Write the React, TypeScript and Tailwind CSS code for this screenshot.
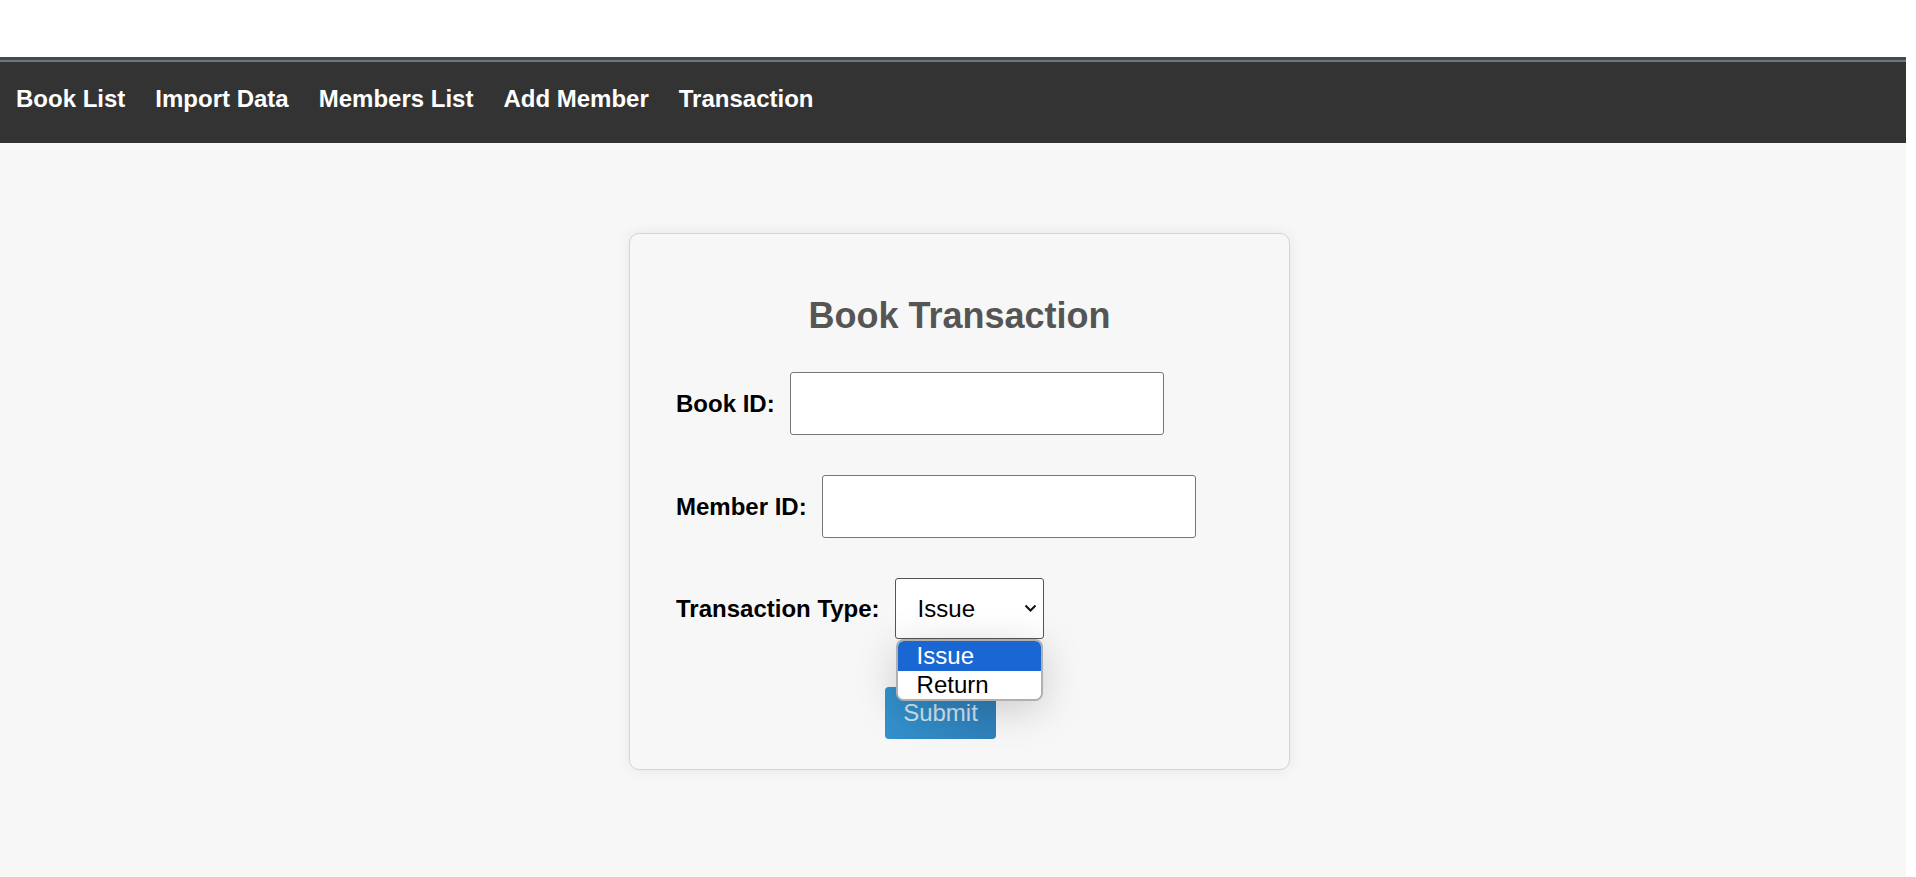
import { useState } from "react";

const navLinks = ["Book List", "Import Data", "Members List", "Add Member", "Transaction"];

function Field({ label, children }: { label: string; children: React.ReactNode }) {
  return (
    <div className="flex items-center gap-[15px]">
      <label className="text-[24px] font-bold text-black leading-[28px]">{label}</label>
      {children}
    </div>
  );
}

export default function App() {
  const [type, setType] = useState("Issue");

  return (
    <div className="min-h-screen w-full bg-white font-['Liberation_Sans',Arial,sans-serif]">
      <div className="w-[1906px] min-h-[877px] flex flex-col">
        {/* blank strip above the nav */}
        <div className="h-[57px] bg-white" />

        {/* Nav bar */}
        <nav className="border-t-[3px] border-[#3f4a52]">
          <div className="border-t-2 border-[#6b7882] h-[83px] bg-[#333333] flex items-center pb-[8px] pl-[16px] gap-[30px]">
            {navLinks.map((link) => (
              <a key={link} href="#" className="text-white text-[24px] font-bold leading-[28px]">
                {link}
              </a>
            ))}
          </div>
        </nav>

        {/* Page */}
        <main className="flex-1 bg-[#f7f7f7] pt-[90px] pl-[629px]">
          <div className="w-[661px] bg-[#f7f7f7] border border-[#d4d4d4] rounded-[10px] shadow-[0_0_14px_rgba(0,0,0,0.07)] pt-[62px] pb-[30px] px-[46px]">
            <h2 className="text-center text-[36px] leading-[40px] font-bold text-[#555555]">Book Transaction</h2>

            <form className="flex flex-col" onSubmit={(e) => e.preventDefault()}>
              <div className="mt-[36px]">
                <Field label="Book ID:">
                  <input className="w-[374px] h-[63px] bg-white border border-[#767676] rounded-[3px] px-2 text-[24px] outline-none" />
                </Field>
              </div>

              <div className="mt-[40px]">
                <Field label="Member ID:">
                  <input className="w-[374px] h-[63px] bg-white border border-[#767676] rounded-[3px] px-2 text-[24px] outline-none" />
                </Field>
              </div>

              <div className="mt-[40px]">
                <Field label="Transaction Type:">
                  <div className="relative">
                    <select
                      value={type}
                      onChange={(e) => setType(e.target.value)}
                      className="appearance-none w-[149px] h-[61px] bg-white border border-[#555555] rounded-[3px] pl-[22px] text-[24px] text-black outline-none"
                    >
                      <option>Issue</option>
                      <option>Return</option>
                    </select>
                    <svg
                      className="absolute right-[7px] top-[26px] pointer-events-none"
                      width="13"
                      height="9"
                      viewBox="0 0 13 9"
                      fill="none"
                    >
                      <polyline points="1.5,1.5 6.5,6.5 11.5,1.5" stroke="#111" strokeWidth="2" />
                    </svg>

                    {/* open dropdown list */}
                    <div className="absolute z-10 left-[1px] top-[61px] w-[147px] bg-white border-2 border-[#b0b0b0] rounded-[8px] overflow-hidden shadow-[0_8px_40px_rgba(0,0,0,0.18)]">
                      <div className="h-[30px] bg-[#1a67d3] text-white text-[24px] leading-[30px] pl-[19px]">Issue</div>
                      <div className="h-[28px] bg-white text-black text-[24px] leading-[28px] pl-[19px]">Return</div>
                    </div>
                  </div>
                </Field>
              </div>

              <div className="mt-[48px] pl-[209px]">
                <button
                  type="submit"
                  className="h-[52px] w-[111px] rounded-[4px] bg-gradient-to-r from-[#3391cd] to-[#2f80ba] text-[#d3e2ec] text-[24px]"
                >
                  Submit
                </button>
              </div>
            </form>
          </div>
        </main>
      </div>
    </div>
  );
}
